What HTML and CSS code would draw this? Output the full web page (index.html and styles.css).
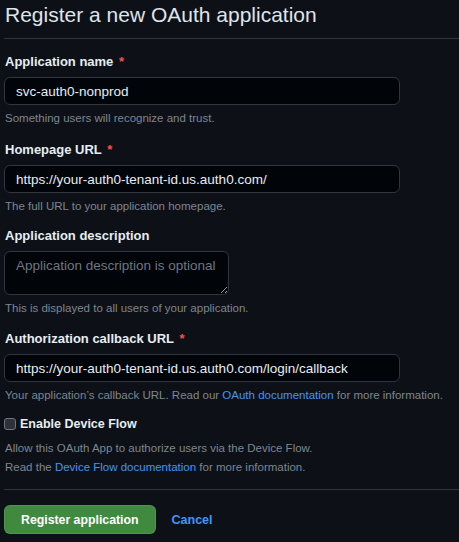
FILE: index.html
```html
<!DOCTYPE html>
<html lang="en">
<head>
<meta charset="utf-8">
<title>Register a new OAuth application</title>
<link rel="stylesheet" href="styles.css">
</head>
<body>
<div class="page">
  <h2 class="subhead">Register a new OAuth application</h2>
  <form class="form">
    <div class="group">
      <label class="label">Application name <span class="req">*</span></label>
      <input class="input wide" type="text" value="svc-auth0-nonprod">
      <p class="note">Something users will recognize and trust.</p>
    </div>
    <div class="group">
      <label class="label">Homepage URL <span class="req">*</span></label>
      <input class="input wide" type="text" value="https://your-auth0-tenant-id.us.auth0.com/">
      <p class="note">The full URL to your application homepage.</p>
    </div>
    <div class="group">
      <label class="label">Application description</label>
      <textarea class="input area" placeholder="Application description is optional"></textarea>
      <p class="note">This is displayed to all users of your application.</p>
    </div>
    <div class="group">
      <label class="label">Authorization callback URL <span class="req">*</span></label>
      <input class="input wide" type="text" value="https://your-auth0-tenant-id.us.auth0.com/login/callback">
      <p class="note">Your application’s callback URL. Read our <a class="link" href="#">OAuth documentation</a> for more information.</p>
    </div>
    <div class="check-group">
      <label class="check-label"><span class="checkbox"></span>Enable Device Flow</label>
      <p class="note">Allow this OAuth App to authorize users via the Device Flow.</p>
      <p class="note">Read the <a class="link" href="#">Device Flow documentation</a> for more information.</p>
    </div>
    <div class="actions">
      <button class="btn-primary" type="button">Register application</button>
      <a class="cancel" href="#">Cancel</a>
    </div>
  </form>
</div>
</body>
</html>
```

FILE: styles.css
```css
* { box-sizing: border-box; }
html, body {
  margin: 0;
  padding: 0;
  background: #0d1117;
}
body {
  font-family: "Liberation Sans", Arial, sans-serif;
  color: #e6edf3;
  font-size: 14px;
  overflow: hidden;
}
.page {
  padding: 0 0 0 4px;
  width: 700px;
}
.subhead {
  margin: 0;
  padding: 0 0 8px 1px;
  font-size: 21px;
  font-weight: 400;
  line-height: 30px;
  color: #dfe4ea;
  border-bottom: 1px solid #30363d;
}
.form {
  padding-top: 12px;
}
.group {
  display: flex;
  flex-direction: column;
  align-items: flex-start;
  margin-bottom: 10px;
}
.group:first-child { margin-bottom: 12px; }
.group:nth-child(3) { margin-bottom: 11px; }
.label {
  font-weight: 700;
  font-size: 13px;
  line-height: 20px;
  padding: 1px 0 0 1px;
  margin-bottom: 5px;
}
.req { color: #f85149; margin-left: 2px; }
.input {
  font-family: inherit;
  font-size: 13.5px;
  color: #e6edf3;
  background: #010409;
  border: 1px solid #30363d;
  border-radius: 6px;
  padding: 0 11px;
  outline: none;
}
.wide { width: 396px; height: 28px; line-height: 26px; }
.area {
  width: 225px;
  height: 44px;
  padding: 4px 11px;
  line-height: 20px;
  resize: vertical;
}
.area::placeholder { color: #6e7681; }
.note {
  margin: 4px 0 0;
  font-size: 11.5px;
  line-height: 18px;
  color: #7d8590;
  padding-left: 1px;
}
.link { color: #4493f8; text-decoration: none; }
.check-group {
  margin-top: 2px;
  padding-bottom: 13px;
  border-bottom: 1px solid #30363d;
}
.check-label {
  display: flex;
  align-items: center;
  font-weight: 700;
  font-size: 12.5px;
  line-height: 20px;
  margin-bottom: 5px;
}
.check-label + .note { margin-top: 0; }
.checkbox {
  width: 12px;
  height: 12px;
  border: 1px solid #6e7681;
  background: #2d3139;
  border-radius: 3px;
  margin-right: 4px;
}
.check-group .note + .note { margin-top: 1px; }
.actions {
  display: flex;
  align-items: center;
  padding-top: 15px;
}
.btn-primary {
  font-family: inherit;
  font-size: 12.3px;
  font-weight: 700;
  color: #ffffff;
  background: #3f8a3f;
  border: 1px solid rgba(240, 246, 252, 0.1);
  border-radius: 6px;
  height: 29px;
  padding: 0 16px;
  white-space: nowrap;
}
.cancel {
  margin-left: 16px;
  color: #4493f8;
  font-weight: 700;
  text-decoration: none;
  font-size: 12.5px;
}
```
